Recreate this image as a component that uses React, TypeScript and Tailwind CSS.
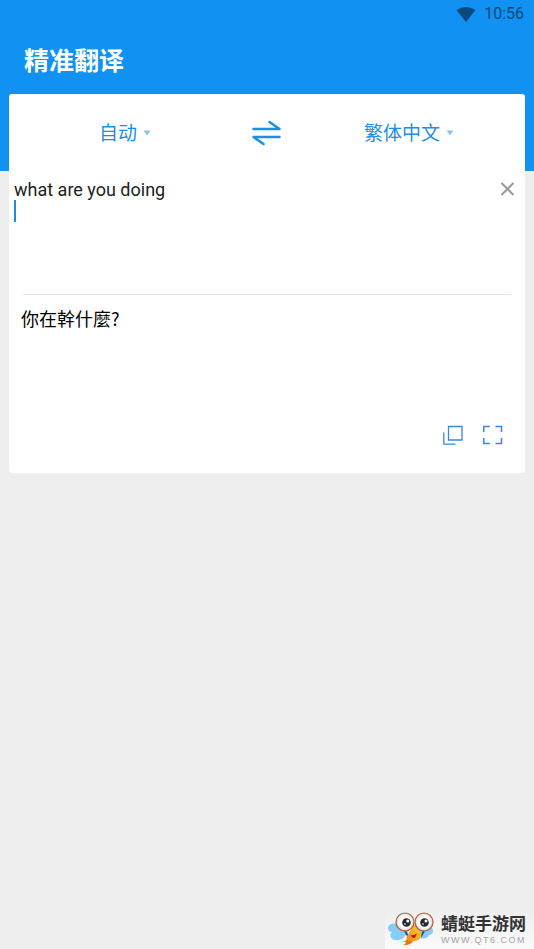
import { useState } from "react";

function Arrow() {
  return (
    <svg className="pointer-events-none h-[6px] w-[8px]" viewBox="0 0 8 6" aria-hidden="true">
      <path d="M0.5 0.5h7L4 5.5z" fill="#8fc1e8" />
    </svg>
  );
}

function LanguagePicker({ label, options }: { label: string; options: string[] }) {
  return (
    <label className="flex items-center gap-[6px]">
      <select
        aria-label={label}
        className="h-8 appearance-none bg-transparent pt-[2px] text-[19px] leading-[30px] text-[#1f8de0] outline-none [field-sizing:content]"
      >
        {options.map((o) => (
          <option key={o}>{o}</option>
        ))}
      </select>
      <Arrow />
    </label>
  );
}

function Dragonfly() {
  return (
    <svg className="h-9 w-[50px]" viewBox="0 0 50 36" aria-hidden="true">
      <defs>
        <radialGradient id="eye">
          <stop offset="0.6" stopColor="#ffffff" />
          <stop offset="1" stopColor="#d9d3d0" />
        </radialGradient>
        <linearGradient id="body" x1="1" y1="0" x2="0" y2="1">
          <stop offset="0.3" stopColor="#fdb827" />
          <stop offset="1" stopColor="#ea6a1c" />
        </linearGradient>
      </defs>
      <path d="M15 14C9 11 3 13 3 17c0 3 2 4 4 4-3 2-2 7 3 8 6 1 11-3 13-9z" fill="#86cdf6" />
      <path d="M37 17c6-3 11-2 11 3 0 3-2 4-4 4-1 4-7 5-12 1z" fill="#86cdf6" />
      <path d="M20 20l3 5 4 1M39 20l-3 5-4 1" fill="none" stroke="#1b4f86" strokeWidth="2" />
      <path d="M29.500 13c3 3 7 6 7 10 0 5-4 7-8 7-2 3-5 4-10 4 3-1 4-2 3-3h-4c3-1 5-2 4-5 2-4 5-8 8-13z" fill="url(#body)" />
      <path d="M17 31c2 0 4 0 5-2 1 1 3 2 5 1-2 3-5 4-9 4 2-1 3-2 3-3z" fill="#e9701d" />
      <path d="M25.500 24q4 1 6-2 0 5-3 5-2 0-3-3z" fill="#a8281a" />
      <circle cx="20" cy="11" r="9" fill="url(#eye)" stroke="#a5613a" strokeWidth="1.200" />
      <circle cx="39" cy="11" r="9" fill="url(#eye)" stroke="#a5613a" strokeWidth="1.200" />
      <circle cx="21.500" cy="11.500" r="4.300" fill="#26292b" />
      <circle cx="39.500" cy="11.500" r="4.300" fill="#26292b" />
      <circle cx="22.800" cy="10" r="1.500" fill="#fff" />
      <circle cx="41" cy="10" r="1.500" fill="#fff" />
      <circle cx="20" cy="13" r="1" fill="#a9b0b4" />
      <circle cx="38" cy="13" r="1" fill="#a9b0b4" />
    </svg>
  );
}

export default function App() {
  const [text, setText] = useState("what are you doing\n");
  return (
    <div lang="zh-Hans" className="flex min-h-screen flex-col bg-[#eeeeee] font-[Roboto,'Noto_Sans_CJK_SC',sans-serif]">
      <header className="bg-[#1192f2] pb-[77px]">
        <div className="flex h-7 items-center justify-end gap-2 pr-[10px] text-[#0b4a7c]">
          <svg className="h-[15px] w-[20px]" viewBox="0 0 20 15" aria-hidden="true">
            <path d="M0.500 3Q10-3 19.500 3L10 15z" fill="currentColor" />
          </svg>
          <span className="text-base">10:56</span>
        </div>
        <h1 className="flex h-[66px] items-center px-6 pt-[2px] text-[25px] font-bold text-white">精准翻译</h1>
      </header>

      <main className="mx-[9px] -mt-[77px] rounded-[3px] bg-white">
        <div className="grid h-[77px] grid-cols-[1fr_52px_1fr] items-center justify-items-center pt-px">
          <LanguagePicker label="源语言" options={["自动", "英语", "简体中文"]} />
          <button type="button" aria-label="交换语言" className="text-[#1f8de0]">
            <svg className="h-[26px] w-[30px]" viewBox="0 0 30 26" fill="none" stroke="currentColor" strokeWidth="2.500" strokeLinecap="round" strokeLinejoin="round" aria-hidden="true">
              <path d="M1.500 9h26L17.500 2M27.500 17h-26l10 7" />
            </svg>
          </button>
          <LanguagePicker label="目标语言" options={["繁体中文", "英语", "日语"]} />
        </div>

        <div className="relative flex h-[123px] items-start pt-2 pr-[10px] pl-[5px]">
          <textarea
            aria-label="输入文本"
            value={text}
            onChange={(e) => setText(e.target.value)}
            className="h-[110px] flex-1 resize-none bg-transparent text-lg leading-[22px] text-[#212121] outline-none"
          />
          <span className="absolute top-[29px] left-[5px] h-[22px] w-[2px] bg-[#1f8de0]" />
          <button type="button" aria-label="清除" className="mt-[3px] text-[#999999]">
            <svg className="h-[14px] w-[15px]" viewBox="0 0 15 14" stroke="currentColor" strokeWidth="2" aria-hidden="true">
              <path d="M1.500 1l12 12M13.500 1l-12 12" />
            </svg>
          </button>
        </div>

        <hr className="mx-[14px] border-[#e4e4e4]" />

        <p lang="zh-Hant" className="h-[124px] px-3 pt-3 font-['Noto_Sans_CJK_TC',sans-serif] text-lg leading-[22px] text-black">
          你在幹什麼?
        </p>

        <div className="flex h-[54px] items-start justify-end gap-5 pt-[6px] pr-[22px] text-[#3f87d2]">
          <button type="button" aria-label="复制">
            <svg className="h-5 w-5" viewBox="0 0 20 20" fill="none" stroke="currentColor" strokeWidth="1.300" aria-hidden="true">
              <path d="M5.500 1.500h13.500v13.500H5.500zM0.800 7.500v11.700h11.700" />
            </svg>
          </button>
          <button type="button" aria-label="全屏">
            <svg className="h-5 w-5" viewBox="0 0 20 20" fill="none" stroke="currentColor" strokeWidth="1.500" aria-hidden="true">
              <path d="M0.800 7V1.500h6M12.500 1.500h6V7M18.500 13v5.500h-6M6.800 18.500h-6V13" />
            </svg>
          </button>
        </div>
      </main>

      <footer className="mt-auto flex justify-end">
        <div className="flex h-10 items-start gap-[6px] bg-linear-to-b from-[#eeeeee] to-[#fafafa] pt-[2px] pr-2">
          <Dragonfly />
          <div className="flex flex-col pt-[2px]">
            <span className="text-[17px] leading-[22px] font-bold text-[#333333]">蜻蜓手游网</span>
            <span className="font-['Liberation_Sans',sans-serif] text-[9px] leading-[10px] tracking-[1.5px] text-[#a5a5a5]">WWW.QT6.COM</span>
          </div>
        </div>
      </footer>
    </div>
  );
}
